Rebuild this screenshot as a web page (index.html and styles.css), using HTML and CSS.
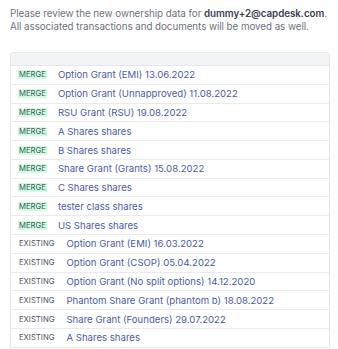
FILE: index.html
```html
<!DOCTYPE html>
<html lang="en">
<head>
    <meta charset="UTF-8">
    <meta name="viewport" content="width=device-width, initial-scale=1.0">
    <title>Review ownership</title>
    <link rel="stylesheet" href="styles.css">
</head>
<body>
    <div class="container">
        <p class="intro">Please review the new ownership data for <strong>dummy+2@capdesk.com</strong>. All associated transactions and documents will be moved as well.</p>

        <div class="review-list">
            <div class="list-head"></div>
            <div class="row"><span class="tag merge">MERGE</span><a href="#">Option Grant (EMI) 13.06.2022</a></div>
            <div class="row"><span class="tag merge">MERGE</span><a href="#">Option Grant (Unnapproved) 11.08.2022</a></div>
            <div class="row"><span class="tag merge">MERGE</span><a href="#">RSU Grant (RSU) 19.08.2022</a></div>
            <div class="row"><span class="tag merge">MERGE</span><a href="#">A Shares shares</a></div>
            <div class="row"><span class="tag merge">MERGE</span><a href="#">B Shares shares</a></div>
            <div class="row"><span class="tag merge">MERGE</span><a href="#">Share Grant (Grants) 15.08.2022</a></div>
            <div class="row"><span class="tag merge">MERGE</span><a href="#">C Shares shares</a></div>
            <div class="row"><span class="tag merge">MERGE</span><a href="#">tester class shares</a></div>
            <div class="row"><span class="tag merge">MERGE</span><a href="#">US Shares shares</a></div>
            <div class="row"><span class="tag">EXISTING</span><a href="#">Option Grant (EMI) 16.03.2022</a></div>
            <div class="row"><span class="tag">EXISTING</span><a href="#">Option Grant (CSOP) 05.04.2022</a></div>
            <div class="row"><span class="tag">EXISTING</span><a href="#">Option Grant (No split options) 14.12.2020</a></div>
            <div class="row"><span class="tag">EXISTING</span><a href="#">Phantom Share Grant (phantom b) 18.08.2022</a></div>
            <div class="row"><span class="tag">EXISTING</span><a href="#">Share Grant (Founders) 29.07.2022</a></div>
            <div class="row"><span class="tag">EXISTING</span><a href="#">A Shares shares</a></div>
            <div class="row"><span class="tag">EXISTING</span><a href="#">B Shares shares</a></div>
        </div>
    </div>
</body>
</html>
```

FILE: styles.css
```css
body {
    margin: 0;
    font-family: Inter, "Noto Sans", sans-serif;
    background: #fff;
}
.container {
    padding: 7px 8px 0 10px;
}
.intro {
    margin: 0 -8px 19px 0;
    font-size: 9.8px;
    line-height: 13px;
    letter-spacing: -0.05px;
    color: #6b7280;
}
.intro strong {
    color: #374151;
    font-weight: 600;
}
.review-list {
    border: 1px solid #e5e7eb;
    border-radius: 3px;
    overflow: hidden;
}
.list-head {
    height: 12px;
    background: #f3f4f6;
    border-bottom: 1px solid #e5e7eb;
}
.row {
    display: flex;
    align-items: center;
    gap: 11px;
    padding: 4.4px 8px 4.4px 7px;
    line-height: 9px;
    border-bottom: 1px solid #e9ebef;
}
.tag {
    padding: 0 1px;
    font-size: 7.7px;
    color: #4b5563;
}
.tag.merge {
    background: #d1fae5;
    color: #3f5f55;
}
.row a {
    font-size: 9.6px;
    color: #4a5ca8;
    text-decoration: none;
}
```
